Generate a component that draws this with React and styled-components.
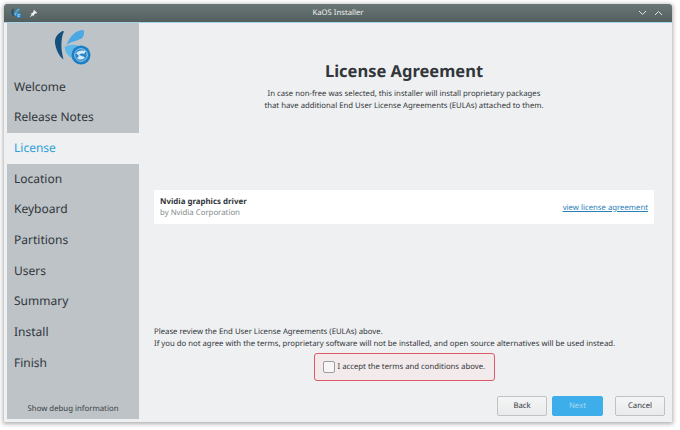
import React from "react";
import styled, { createGlobalStyle } from "styled-components";

const Global = createGlobalStyle`
  html, body { margin: 0; padding: 0; background: #fff; }
  body { font-family: "Noto Sans", "Open Sans", sans-serif; color: #31363b; text-rendering: geometricPrecision; }
`;
const Page = styled.div`
  width: 680px; height: 430px; padding: 4px 8px 8px 4px; box-sizing: border-box; overflow: hidden;
`;
const Window = styled.div`
  height: 100%; display: flex; flex-direction: column; background: #eff0f1;
  border-radius: 3px 3px 0 0; box-shadow: 0 1px 4px 1px rgba(0,0,0,.32);
`;
const TitleBar = styled.div`
  height: 18px; flex: none; display: flex; align-items: center; padding: 0 9px 0 7px; gap: 7px;
  background: linear-gradient(#6b7775, #535f5f); color: #e8ecec; font-size: 7.7px;
  border-bottom: 1px solid #a5d4e8; border-radius: 3px 3px 0 0;
`;
const Title = styled.div`
  flex: 1; text-align: center; color: #f0f2f2;
`;
const Body = styled.div`
  flex: 1; display: flex; min-height: 0; padding: 0 0 3px 3px;
`;
const Sidebar = styled.nav`
  width: 132px; flex: none; background: #bdc3c7; display: flex; flex-direction: column;
`;
const LogoWrap = styled.div`
  height: 49px; flex: none; display: flex; justify-content: center; padding-top: 5px; box-sizing: border-box;
`;
const NavItem = styled.div`
  height: 30.67px; display: flex; align-items: center; padding: 0 0 2px 7px; box-sizing: border-box; font-size: 12px;
  background: ${p => (p.$active ? "#eff0f1" : "transparent")};
  color: ${p => (p.$active ? "#2d9fd9" : "#31363b")};
`;
const Debug = styled.div`
  margin-top: auto; height: 15px; font-size: 7.8px; text-align: center; color: #3c4145;
`;
const Main = styled.main`
  flex: 1; min-width: 0; display: flex; flex-direction: column; padding: 36px 18px 0 15px;
`;
const Heading = styled.h1`
  margin: 0; font-size: 16.5px; line-height: 23px; font-weight: 700; text-align: center; color: #31363b;
`;
const Intro = styled.p`
  margin: 7px 0 0; font-size: 7.75px; line-height: 11.5px; text-align: center; color: #31363b;
`;
const Card = styled.div`
  margin-top: 78px; height: 34px; padding: 1px 6px 0; box-sizing: border-box; background: #fff; display: flex; align-items: center;
  justify-content: space-between;
`;
const CardName = styled.div`
  font-size: 7.9px; line-height: 11px; font-weight: 700; color: #31363b;
`;
const CardBy = styled.div`
  font-size: 7.8px; line-height: 11px; color: #7f8c8d;
`;
const LinkText = styled.a`
  font-size: 7.75px; color: #2980b9; text-decoration: underline;
`;
const Notice = styled.p`
  margin: 103px 0 0; font-size: 7.75px; line-height: 11.5px; color: #31363b; white-space: nowrap;
`;
const Accept = styled.div`
  align-self: center; margin-top: 3px; width: 181px; height: 28px; box-sizing: border-box;
  display: flex; align-items: center; gap: 3px; padding-left: 8px; white-space: nowrap;
  background: #f3eaeb; border: 1px solid #dd5a66; border-radius: 3px; font-size: 7.75px; color: #31363b;
`;
const Box = styled.span`
  width: 10px; height: 10px; flex: none; background: #f7f5f5; border: 1px solid #9a9ea1; border-radius: 2px;
`;
const Footer = styled.div`
  margin: auto -11px 0 0; display: flex; padding: 0 0 3px; justify-content: flex-end;
`;
const Btn = styled.button`
  width: ${p => (p.$primary ? "51px" : "50px")}; height: 20px; padding: 0; font: 7.75px "Noto Sans", sans-serif; border-radius: 2px; box-sizing: border-box;
  text-rendering: geometricPrecision;
  border: 1px solid ${p => (p.$primary ? "#3daee9" : "#c0c3c5")};
  background: ${p => (p.$primary ? "#3daee9" : "linear-gradient(#f4f5f5, #e9eaeb)")};
  color: ${p => (p.$primary ? "#a5daf5" : "#31363b")};
  margin-left: ${p => p.$left}px;
`;

const Logo = ({ size = 40 }) => (
  <svg width={size} height={size} viewBox="0 0 40 40">
    <path d="M9.5 3 C4 6 1.5 10 2 15 C3 22 6 28 10.5 31.5 C9 26 8 20 8.5 14 C8.8 10 9.5 6 11 3.5 C10.5 3 10 2.8 9.5 3Z" fill="#14507c" />
    <path d="M30.5 2 C23 2 17 8 13.5 17 C18 13.5 24 13 28.5 10.5 C31 9 31.5 5 30.5 2Z" fill="#4aa8e4" />
    <path d="M11.5 19 C17 15.5 25 16 30 20 C25 20.5 21 24 19 30 C15 28 12 24 11.5 19Z" fill="#60b8ea" />
    <circle cx="28" cy="27" r="9.5" fill="#1f7fc4" />
    <circle cx="28" cy="27" r="6.3" fill="#2a86cb" stroke="#9fd0ee" strokeWidth="1" />
    <path d="M23 25 C26 22 30 22 33 23 L31 26 C29 25 27 26 26 27 C28 28 31 28 32 30 C29 32 26 32 24 30 L26 28Z" fill="#d5e9f6" />
  </svg>
);
const Pin = () => (
  <svg width="9" height="9" viewBox="0 0 9 9"><path d="M5 .8 8.2 4 7.3 4.5 6.4 4.2 4.7 6 4.6 7.4 1.6 4.4 3 4.3 4.8 2.6 4.5 1.7ZM2.6 5.6 3.4 6.4.6 8.4Z" fill="#f4f6f6" /></svg>
);
const Chevron = ({ up }) => (
  <svg width="9" height="6" viewBox="0 0 9 6"><path d={up ? "M1 5 4.5 1.5 8 5" : "M1 1 4.5 4.5 8 1"} fill="none" stroke="#dfe4e4" strokeWidth="1" /></svg>
);

const steps = ["Welcome", "Release Notes", "License", "Location", "Keyboard", "Partitions", "Users", "Summary", "Install", "Finish"];

export default function App() {
  return (
    <Page>
      <Global />
      <Window>
        <TitleBar>
          <Logo size={11} />
          <Pin />
          <Title>KaOS Installer</Title>
          <Chevron />
          <Chevron up />
        </TitleBar>
        <Body>
          <Sidebar>
            <LogoWrap><Logo /></LogoWrap>
            {steps.map(s => <NavItem key={s} $active={s === "License"}>{s}</NavItem>)}
            <Debug>Show debug information</Debug>
          </Sidebar>
          <Main>
            <Heading>License Agreement</Heading>
            <Intro>
              In case non-free was selected, this installer will install proprietary packages<br />
              that have additional End User License Agreements (EULAs) attached to them.
            </Intro>
            <Card>
              <div>
                <CardName>Nvidia graphics driver</CardName>
                <CardBy>by Nvidia Corporation</CardBy>
              </div>
              <LinkText>view license agreement</LinkText>
            </Card>
            <Notice>
              Please review the End User License Agreements (EULAs) above.<br />
              If you do not agree with the terms, proprietary software will not be installed, and open source alternatives will be used instead.
            </Notice>
            <Accept><Box />I accept the terms and conditions above.</Accept>
            <Footer>
              <Btn $left={0}>Back</Btn>
              <Btn $primary $left={5}>Next</Btn>
              <Btn $left={12}>Cancel</Btn>
            </Footer>
          </Main>
        </Body>
      </Window>
    </Page>
  );
}
